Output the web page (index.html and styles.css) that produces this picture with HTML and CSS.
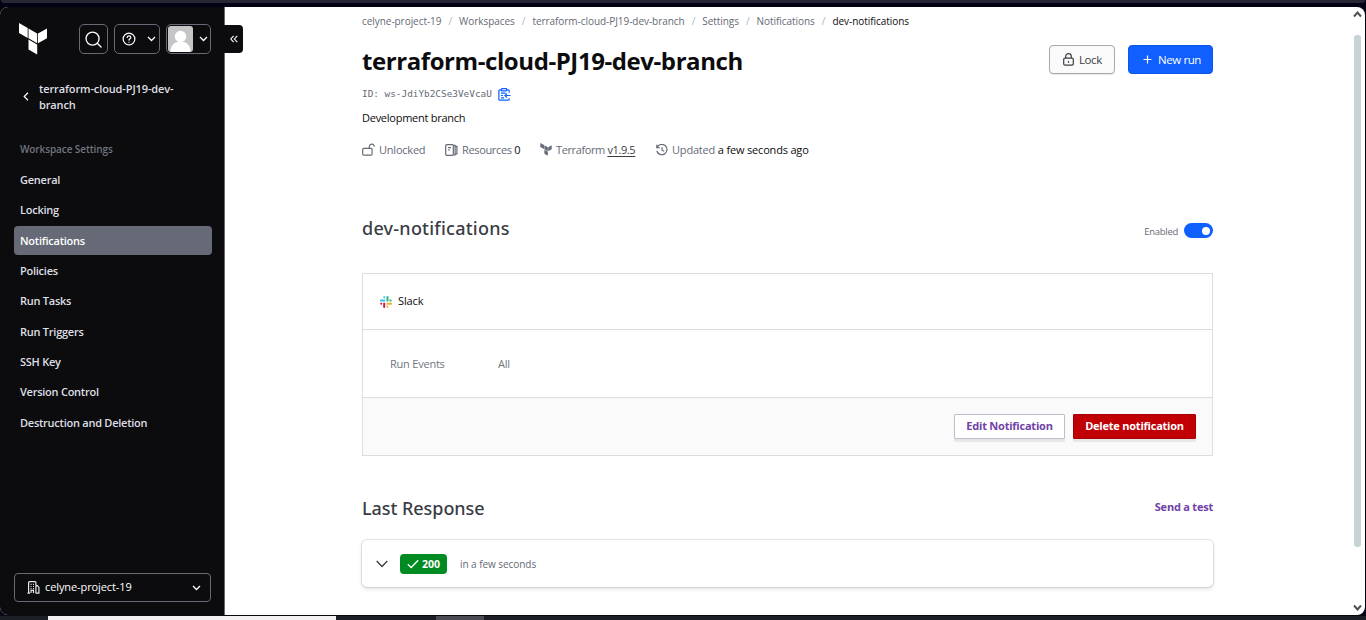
FILE: index.html
```html
<!DOCTYPE html>
<html lang="en">
<head>
<meta charset="utf-8">
<title>dev-notifications | terraform-cloud-PJ19-dev-branch</title>
<link rel="stylesheet" href="styles.css">
</head>
<body>
<div class="browser-strip"></div>
<div class="app">
  <aside class="sidebar">
    <div class="side-top">
      <svg class="logo" width="28" height="32" viewBox="0 0 28 32" fill="#fff"><path d="M0 0l8.700 5v10L0 10z"/><path d="M9.500 5.500l8.700 5v9.700l-8.700-5z"/><path d="M19 10.500l9-5v9.800l-9 5z"/><path d="M9.500 16.500l8.700 5v10l-8.700-5z"/></svg>
      <button class="side-btn search"><svg width="17" height="17" viewBox="0 0 18 18" fill="none" stroke="#fff" stroke-width="1.400" stroke-linecap="round"><circle cx="8" cy="8" r="6.900"/><path d="M13 13l4 4"/></svg></button>
      <button class="side-btn help"><svg width="14" height="14" viewBox="0 0 16 16" fill="none" stroke="#fff" stroke-width="1.400" stroke-linecap="round"><circle cx="8" cy="8" r="6.700"/><path d="M5.900 6.300c.1-1.200 1-1.900 2.100-1.900s2.100.7 2.100 1.800C10.100 7.700 8 7.800 8 9.200M8 11.600v.1"/></svg><svg class="chev" width="9" height="6" viewBox="0 0 9 6"><path d="M1 1l3.500 3.500L8 1"/></svg></button>
      <button class="side-btn user"><span class="avatar"><svg width="25" height="26" viewBox="0 0 25 26" fill="#fff"><circle cx="12.500" cy="10.500" r="5.700"/><path d="M2.500 26c0-7 4-10.500 10-10.500s10 3.500 10 10.500z"/></svg></span><svg class="chev" width="9" height="6" viewBox="0 0 9 6"><path d="M1 1l3.500 3.500L8 1"/></svg></button>
    </div>
    <a class="back"><svg width="6" height="9" viewBox="0 0 6 9" fill="none" stroke="#fff" stroke-width="1.200"><path d="M5 .8L1.200 4.500 5 8.200"/></svg><span>terraform-cloud-PJ19-dev-<br>branch</span></a>
    <h4 class="nav-title">Workspace Settings</h4>
    <nav class="nav">
      <a>General</a><a>Locking</a><a class="active">Notifications</a><a>Policies</a><a>Run Tasks</a><a>Run Triggers</a><a>SSH Key</a><a>Version Control</a><a>Destruction and Deletion</a>
    </nav>
    <button class="org"><svg width="13" height="13" viewBox="0 0 13 13" fill="none" stroke="#e8e8ea" stroke-width="1.200"><path d="M1.600 12V1.600q0-.9.900-.9h5.500q.9 0 .9.900V12M.5 12.200h2.500M8.900 4.600h1.500l1.500 1.800v5.800H8.500M4 12v-2.600h2.500V12"/><path d="M3.600 3.400h1M6 3.400h1M3.600 5.500h1M6 5.500h1M3.600 7.600h1M6 7.600h1"/></svg><span>celyne-project-19</span><svg class="chev" width="9" height="6" viewBox="0 0 9 6"><path d="M1 1l3.500 3.500L8 1"/></svg></button>
    <button class="collapse"><svg width="8" height="8" viewBox="0 0 8 8" fill="none" stroke="#fff" stroke-width="1.100"><path d="M3.700 .8L.8 4l2.900 3.200M7.300 .8L4.400 4l2.900 3.200"/></svg></button>
  </aside>
  <main class="main">
    <div class="content">
      <ol class="crumbs"><li>celyne-project-19</li><li>Workspaces</li><li>terraform-cloud-PJ19-dev-branch</li><li>Settings</li><li>Notifications</li><li class="current">dev-notifications</li></ol>
      <header class="page-head">
        <h1>terraform-cloud-PJ19-dev-branch</h1>
        <div class="actions">
          <button class="lock"><svg width="11" height="13" viewBox="0 0 11 13" fill="none" stroke="#3b3d45" stroke-width="1.200"><rect x=".7" y="5.200" width="9.600" height="6.900" rx="1.300"/><path d="M2.700 5V3.400a2.800 2.800 0 0 1 5.600 0V5M5.500 8v1.700"/></svg><span>Lock</span></button>
          <button class="new-run"><svg width="9" height="9" viewBox="0 0 9 9" stroke="#fff" stroke-width="1.200"><path d="M4.500 .5v8M.5 4.500h8"/></svg><span>New run</span></button>
        </div>
      </header>
      <div class="ws-id"><span>ID: ws-JdiYb2CSe3VeVcaU</span><svg width="13" height="13" viewBox="0 0 13 13" fill="none" stroke="#1060ff" stroke-width="1.200"><path d="M3.500 1.800H1.900q-1 0-1 1v8.400q0 1 1 1h8.300q1 0 1-1v-1M8.700 1.800h1.500q1 0 1 1v2"/><rect x="3.500" y=".7" width="5.200" height="2.200" rx=".7"/><path d="M3 5.200h4.500M3 7.500h2M3 9.800h3M12.500 7.500H7M9 5.400L6.900 7.500 9 9.600"/></svg></div>
      <p class="desc">Development branch</p>
      <div class="meta">
        <span class="m1"><svg width="13" height="13" viewBox="0 0 13 13" fill="none" stroke="#656a76" stroke-width="1.200"><rect x=".7" y="5.400" width="9.400" height="6.800" rx="1.200"/><path d="M7.300 5.200V3.500a2.500 2.500 0 0 1 4.900-.6v.8"/></svg><i>Unlocked</i></span>
        <span class="m2"><svg width="13" height="12" viewBox="0 0 13 12" fill="none" stroke="#656a76" stroke-width="1.200"><rect x=".7" y=".7" width="7.600" height="10.600" rx="1"/><path d="M3 3.700h3M3 6h2M8.500 1.300h1.600v9.500H8.500M10.500 2.300h1.400v7.500h-1.400"/></svg><i>Resources <b>0</b></i></span>
        <span class="m3"><svg width="12" height="13" viewBox="0 0 28 32" fill="#656a76"><path d="M0 0l9 5v10L0 10z"/><path d="M10 5.700l8.500 4.800v9.700L10 15.300z"/><path d="M19.500 10.500L28 5.700v9.800l-8.500 4.800z"/><path d="M10 16.700l8.500 4.800V31.500L10 26.700z"/></svg><i>Terraform <b class="ver">v1.9.5</b></i></span>
        <span class="m4"><svg width="12" height="12" viewBox="0 0 12 12" fill="none" stroke="#656a76" stroke-width="1.200"><path d="M.8 .8v2.900h2.900M1 3.500a5.200 5.200 0 1 1-.2 3.500M6 3.200V6.200l2.200 1.100"/></svg><i>Updated <b>a few seconds ago</b></i></span>
      </div>
      <div class="section-head"><h2>dev-notifications</h2><label class="enabled"><span>Enabled</span><span class="toggle"></span></label></div>
      <section class="panel">
        <div class="panel-title"><svg width="12" height="12" viewBox="0 0 12 12"><path fill="#36c5f0" d="M.8 3.500h4.400v2H.8a1 1 0 0 1 0-2zM4.200.3h1v2h-1a1 1 0 0 1 0-2z"/><path fill="#2eb67d" d="M6.500 1a1 1 0 0 1 2 0v4.500h-2zM9.500 3.500h1.200a1 1 0 0 1 0 2H9.500z"/><path fill="#ecb22e" d="M6.500 6.700H11a1 1 0 0 1 0 2H6.500zM6.500 9.700h1a1 1 0 1 1-1 1z"/><path fill="#d2194f" d="M3.200 6.700h2V11a1 1 0 0 1-2 0zM1 6.700h1.200v1a1 1 0 1 1-1.200-1z"/></svg><span>Slack</span></div>
        <div class="panel-row"><span class="key">Run Events</span><span>All</span></div>
        <div class="panel-foot"><button class="edit">Edit Notification</button><button class="delete">Delete notification</button></div>
      </section>
      <div class="response-head"><h2 class="last">Last Response</h2><a>Send a test</a></div>
      <section class="response"><svg width="12" height="8" viewBox="0 0 12 8" fill="none" stroke="#3b3d45" stroke-width="1.300"><path d="M.7 1L6 6.500 11.300 1"/></svg><span class="badge"><svg width="12" height="10" viewBox="0 0 12 10" fill="none" stroke="#fff" stroke-width="1.300"><path d="M.8 5.300L4.200 8.500 11.200 1.200"/></svg><span>200</span></span><span class="when">in a few seconds</span></section>
    </div>
    <div class="scroll"><svg width="9" height="7" viewBox="0 0 9 7"><path d="M1 5.500l3.500-4 3.500 4"/></svg><div class="thumb"></div><svg width="9" height="7" viewBox="0 0 9 7"><path d="M1 1.500l3.500 4 3.500-4"/></svg></div>
  </main>
</div>
<div class="taskbar"><span class="task-search"></span><span class="task-active"></span></div>
</body>
</html>
```
FILE: styles.css
```css
* { box-sizing: border-box; }
body { margin: 0; width: 1366px; height: 620px; overflow: hidden; background: #020214; font-family: "Open Sans", "Noto Sans", sans-serif; font-size: 11px; letter-spacing: -.22px; color: #0c0c0e; white-space: nowrap; }
button { font: inherit; letter-spacing: inherit; margin: 0; padding: 0; display: flex; align-items: center; }
h1, h2, h4, p, ol { margin: 0; padding: 0; }
svg { flex: none; display: block; }
i, b { font-style: normal; font-weight: 400; }
.browser-strip { height: 3px; margin: 0 1px 4px; background: #252734; border-radius: 0 0 5px 5px; }
.app { display: flex; height: 608px; width: 1365px; border-radius: 8px; overflow: hidden; background: #fff; }

.sidebar { position: relative; width: 225px; flex: none; background: #0c0c0e; border-right: 1px solid #656a76; display: flex; flex-direction: column; }
.side-top { display: flex; padding: 16px 0 0 19px; height: 62px; }
.logo { margin-right: 32px; }
.side-btn { height: 30px; margin-top: 1px; border: 1px solid #656a76; border-radius: 5px; background: #0c0c0e; }
.search { width: 29px; padding-left: 5px; margin-right: 6px; }
.help { width: 46px; padding: 0 3px 0 7px; justify-content: space-between; margin-right: 6px; }
.user { width: 45px; padding: 0 2px 0 1px; justify-content: space-between; }
.avatar { width: 25px; height: 26px; background: #c5c5c5; border-radius: 3px; overflow: hidden; }
.chev { fill: none; stroke: #fff; stroke-width: 1.300; }
.back { display: flex; align-items: center; height: 32px; margin: 12px 0 0 23px; color: #dedfe3; font-weight: 600; line-height: 16px; letter-spacing: -.12px; }
.back svg { margin-top: -2px; }
.back span { margin-left: 10px; }
.nav-title { margin: 28px 0 0 20px; height: 17px; line-height: 17px; color: #70747f; font-size: 10px; font-weight: 600; letter-spacing: -.1px; }
.nav { display: flex; flex-direction: column; gap: 1.350px; padding: 7px 12px 0 14px; }
.nav a { height: 29px; line-height: 29px; padding-left: 6px; border-radius: 4px; color: #dedfe3; font-weight: 600; letter-spacing: -.25px; }
.nav .active { background: #656a76; color: #fff; }
.org { margin: auto 13px 13px 14px; height: 29px; padding: 0 9px 0 12px; background: #0c0c0e; border: 1px solid #656a76; border-radius: 4px; color: #fff; letter-spacing: -.1px; }
.org span { margin: 0 auto 0 5px; padding-bottom: 2px; }
.collapse { position: absolute; left: 224px; top: 18px; width: 19px; height: 28px; justify-content: center; background: #0c0c0e; border: 0; border-radius: 0 4px 4px 0; z-index: 1; }

.main { flex: 1; display: flex; justify-content: space-between; padding-left: 137px; }
.content { width: 851px; }
.crumbs { display: flex; list-style: none; height: 17px; margin-top: 6px; line-height: 17px; font-size: 10px; letter-spacing: -.05px; color: #656a76; }
.crumbs li + li::before { content: "/"; color: #b0b3ba; margin: 0 7px; }
.crumbs .current { color: #0c0c0e; }
.page-head { display: flex; justify-content: space-between; height: 44px; margin-top: 8px; }
h1 { font-size: 24px; line-height: 34px; margin-top: 6px; font-weight: 700; letter-spacing: -.42px; }
.actions { display: flex; gap: 13px; margin-top: 7px; }
.actions button { height: 29px; border-radius: 4px; font-size: 11.500px; letter-spacing: -.4px; }
.lock { width: 66px; padding-left: 13px; gap: 5px; background: #fafafa; border: 1px solid #a8aab0; color: #3b3d45; box-shadow: 0 1px 1px rgba(101,106,118,.15); }
.actions span { padding-bottom: 1px; }
.new-run { width: 85px; padding-left: 14px; gap: 6px; background: #1060ff; border: 1px solid #0c56e9; color: #fff; }
.ws-id { display: flex; align-items: center; height: 16px; margin-top: 4px; gap: 6px; font-family: "DejaVu Sans Mono", monospace; font-size: 9.400px; letter-spacing: 0; color: #656a76; }
.ws-id span { padding-bottom: 1px; }
.desc { margin-top: 8px; height: 16px; line-height: 16px; letter-spacing: -.26px; }
.meta { display: flex; height: 16px; margin-top: 16px; line-height: 16px; color: #656a76; }
.meta span { display: flex; align-items: center; gap: 4px; }
.meta svg { margin-top: -1px; }
.m1 { width: 83px; } .m2 { width: 95px; letter-spacing: -.35px; } .m3 { width: 116px; letter-spacing: -.38px; } .m4 { letter-spacing: -.18px; }
.meta b { color: #0c0c0e; }
.meta .ver { color: #3b3d45; text-decoration: underline; text-underline-offset: 2px; }
.section-head { display: flex; justify-content: space-between; align-items: center; height: 30px; margin-top: 55px; }
h2 { font-family: "Noto Sans", "Open Sans", sans-serif; font-size: 18px; font-weight: 500; letter-spacing: .24px; color: #3b3d45; line-height: 30px; }
.last { letter-spacing: -.05px; }
.enabled { display: flex; align-items: center; gap: 6px; font-size: 9.500px; letter-spacing: -.3px; color: #656a76; padding-top: 7px; }
.toggle { width: 29px; height: 15px; border-radius: 8px; background: #1060ff; display: flex; justify-content: flex-end; padding: 4px 3px; margin-top: -2px; }
.toggle::before { content: ""; width: 8px; height: 8px; border-radius: 50%; background: #fff; }
.panel { height: 183px; margin-top: 30px; border: 1px solid #dcdde0; display: flex; flex-direction: column; }
.panel-title { height: 56px; border-bottom: 1px solid #dcdde0; display: flex; align-items: center; gap: 6px; padding-left: 17px; letter-spacing: -.1px; }
.panel-title svg { margin-top: 1px; }
.panel-title span { padding-bottom: 2px; }
.panel-row { height: 68px; display: flex; align-items: center; padding-left: 27px; color: #6f7682; border-bottom: 1px solid #dcdde0; }
.key { width: 108px; }
.panel-foot { flex: 1; background: #fafafa; display: flex; justify-content: flex-end; gap: 8px; padding: 16px 16px 0; }
.panel-foot button { height: 25px; padding-bottom: 2px; justify-content: center; border-radius: 1px; font-weight: 700; letter-spacing: -.22px; box-shadow: 0 3px 1px rgba(0,0,0,.08); }
.edit { width: 111px; background: #fff; border: 1px solid #bac1cc; color: #7042a8; }
.delete { width: 123px; background: #c00005; border: 1px solid #a30008; color: #fff; }
.response-head { display: flex; justify-content: space-between; height: 30px; margin-top: 37px; }
.response-head a { line-height: 28px; font-weight: 700; letter-spacing: -.22px; color: #7042a8; }
.response { height: 47px; margin-top: 17px; display: flex; align-items: center; padding-left: 14px; border-radius: 5px; box-shadow: 0 0 0 1px rgba(101,106,118,.16), 0 2px 4px rgba(101,106,118,.2); }
.badge { width: 47px; height: 20px; margin: 1px 13px 0 12px; padding-left: 7px; display: flex; align-items: center; gap: 3px; background: #008a22; border-radius: 4px; color: #fff; font-weight: 700; font-size: 10.500px; letter-spacing: 0; }
.when { font-size: 10px; letter-spacing: -.05px; color: #656a76; }
.scroll { width: 9px; margin-right: 3px; padding: 4px 0 4px; display: flex; flex-direction: column; align-items: center; }
.scroll svg { fill: none; stroke: #505050; stroke-width: 2; }
.thumb { width: 7px; height: 512px; margin: 17px 0 auto; background: #c8d2d7; border-radius: 3px; }
.taskbar { height: 5px; background: #1b1e25; border-top: 1px solid #090a10; display: flex; }
.task-search { width: 288px; margin-left: 48px; background: #f3f1f1; }
.task-active { width: 48px; margin-left: 100px; background: #4b4c53; }
```
